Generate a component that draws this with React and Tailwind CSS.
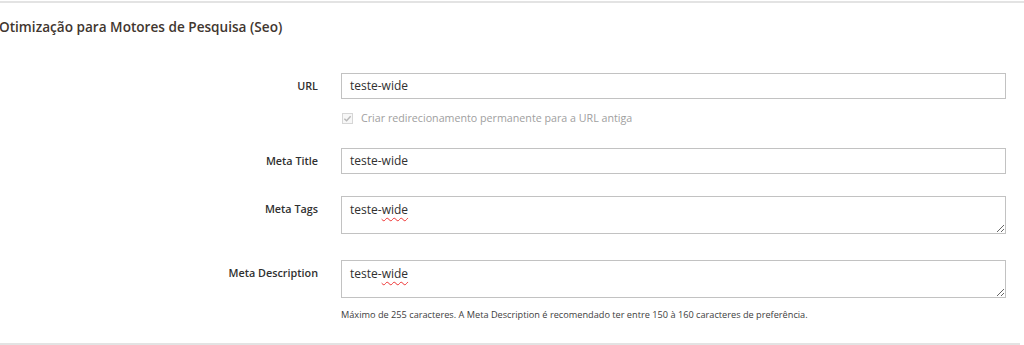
import React from 'react';

const font = { fontFamily: '"Open Sans", "Liberation Sans", sans-serif' };

const Label = ({ children }) => (
    <div className='w-[318px] shrink-0 h-[26px] flex items-center justify-end text-[10.8px] font-semibold text-[#303030]'>
        {children}
    </div>
);

const Input = ({ value }) => (
    <div className='w-[665px] h-[26px] border border-[#c2c2c2] bg-white flex items-center px-[8px] text-[12px] text-[#303030]'>
        {value}
    </div>
);

const Area = () => (
    <div className='w-[665px] h-[38px] border border-[#c2c2c2] bg-white resize overflow-auto px-[8px] pt-[5px] text-[12px] leading-[16px] text-[#303030]'>
        teste-<span className='underline decoration-wavy decoration-[#e33] decoration-1 underline-offset-[3px]'>wide</span>
    </div>
);

const App = () => {
    return (
        <div className='w-[1024px] h-[345px] bg-white overflow-hidden' style={font}>
            <div className='h-[2px] mt-[1px] bg-[#e3e3e3]' />
            <h2 className='-ml-[1px] mt-[15px] text-[13.6px] font-semibold text-[#41362f] leading-[18px]'>
                Otimização para Motores de Pesquisa (Seo)
            </h2>

            <div className='mt-[37px] flex flex-col'>
                <div className='flex gap-[23px]'>
                    <Label>URL</Label>
                    <Input value='teste-wide' />
                </div>
                <div className='flex items-center gap-[8px] ml-[342px] mt-[13px] h-[12px]'>
                    <span className='w-[11px] h-[11px] border border-[#d6d6d6] bg-[#f7f7f7] flex items-center justify-center'>
                        <svg width='9' height='9' viewBox='0 0 10 10'>
                            <path d='M1.5 5.2 L4 7.5 L8.5 2.5' fill='none' stroke='#b8b8b8' strokeWidth='1.6' />
                        </svg>
                    </span>
                    <span className='text-[10.7px] text-[#a0a0a0]'>Criar redirecionamento permanente para a URL antiga</span>
                </div>

                <div className='flex gap-[23px] mt-[24px]'>
                    <Label>Meta Title</Label>
                    <Input value='teste-wide' />
                </div>

                <div className='flex gap-[23px] mt-[22px]'>
                    <Label>Meta Tags</Label>
                    <Area />
                </div>

                <div className='flex gap-[23px] mt-[26px]'>
                    <Label>Meta Description</Label>
                    <Area />
                </div>

                <p className='ml-[341px] mt-[10px] text-[9.2px] text-[#404040] leading-[14px]'>
                    Máximo de 255 caracteres. A Meta Description é recomendado ter entre 150 à 160 caracteres de preferência.
                </p>
            </div>
            <div className='mt-[21px] w-[1020px] h-[2px] bg-[#e3e3e3]' />
        </div>
    );
};

export default App;
